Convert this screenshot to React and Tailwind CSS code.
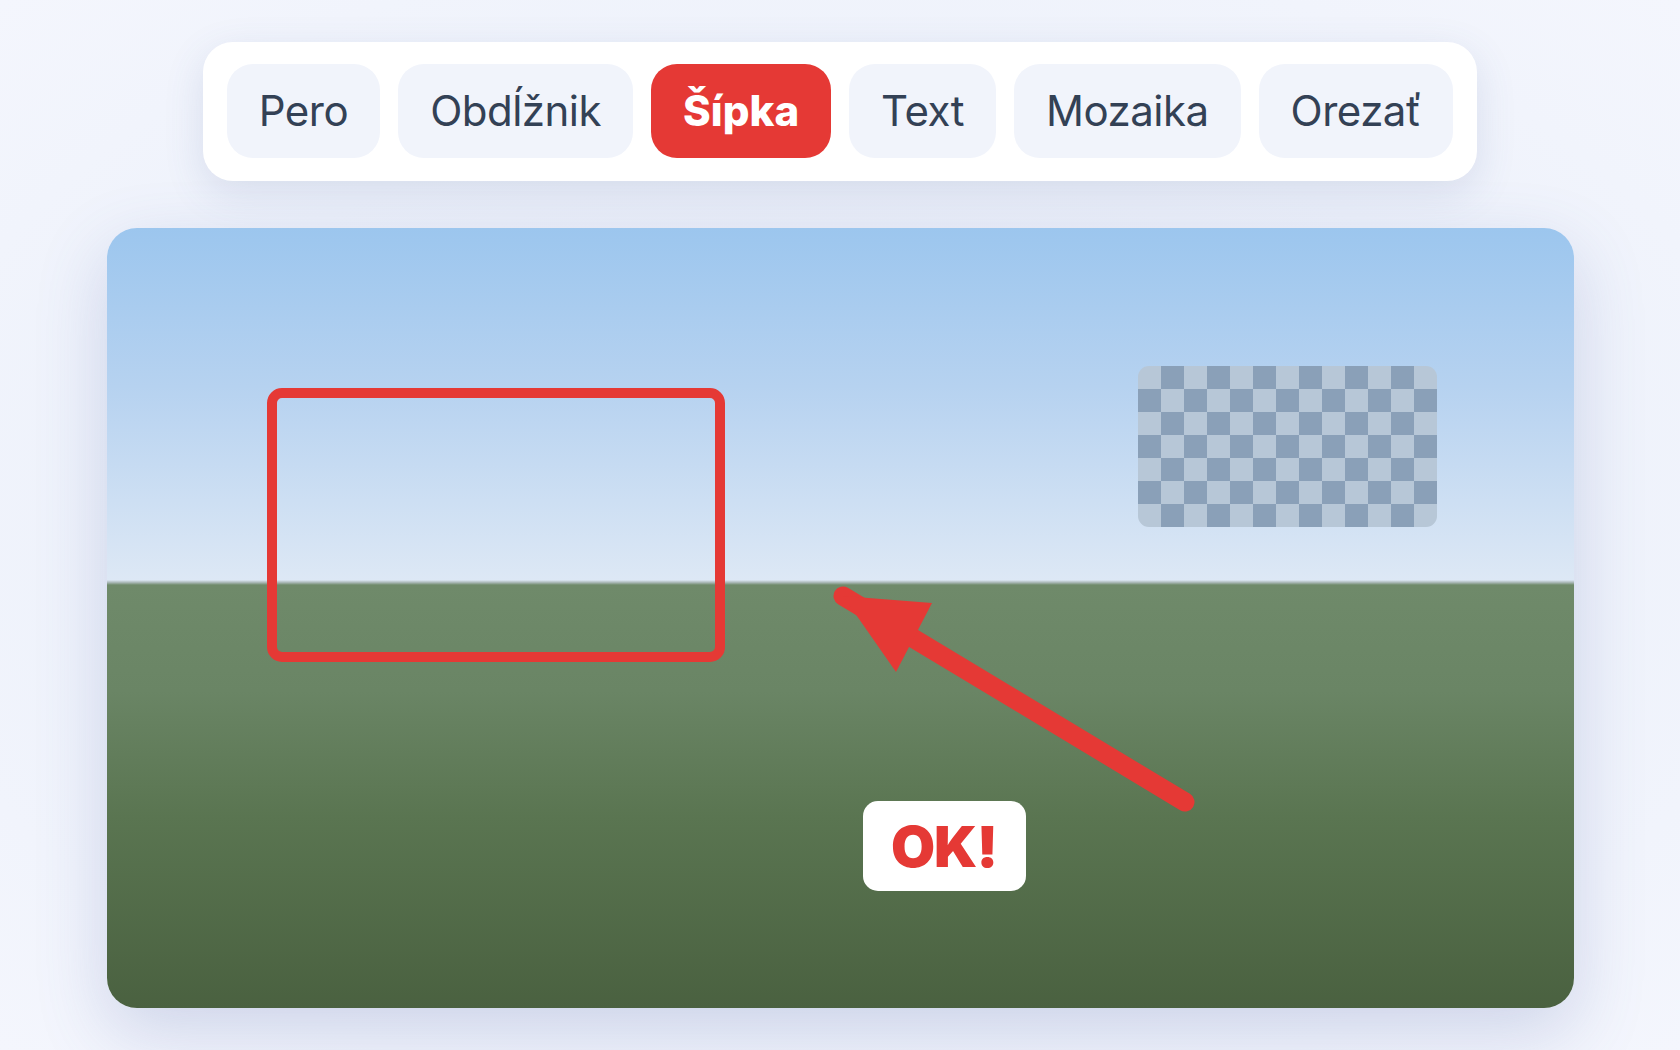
import React from "react";

const tools = ["Pero", "Obdĺžnik", "Šípka", "Text", "Mozaika", "Orezať"];

function Mosaic() {
  const cells = [];
  for (let r = 0; r < 7; r++) {
    for (let c = 0; c < 13; c++) {
      const light = (r + c) % 2 === 0;
      cells.push(
        <div key={`${r}-${c}`} className={light ? "bg-[#b7c7d7]" : "bg-[#8aa0b8]"} />
      );
    }
  }
  return (
    <div className="absolute left-[1031px] top-[138px] w-[299px] h-[161px] rounded-[11px] overflow-hidden grid grid-cols-[repeat(13,23px)] grid-rows-[repeat(7,23px)]">
      {cells}
    </div>
  );
}

export default function App() {
  return (
    <div
      className="min-h-[1050px] w-full flex flex-col items-center pt-[42px] gap-[47px] bg-[radial-gradient(ellipse_at_50%_50%,#e8ecf7_0%,#eef2fb_60%,#f4f6fd_100%)]"
      style={{ fontFamily: "Inter, 'Noto Sans', sans-serif" }}
    >
      <div className="flex items-center gap-[18px] bg-white rounded-[30px] px-[24px] pt-[22px] pb-[23px] shadow-[0_12px_40px_rgba(70,90,150,0.14)]">
        {tools.map((t) => {
          const active = t === "Šípka";
          return (
            <div
              key={t}
              className={
                active
                  ? "h-[94px] px-[32px] flex items-center rounded-[26px] bg-[#e53935] text-white font-extrabold text-[42px] leading-none tracking-[0px]"
                  : "h-[94px] px-[32px] flex items-center rounded-[26px] bg-[#f1f4fb] text-[#334155] font-normal text-[42px] leading-none tracking-[-0.5px]"
              }
            >
              {t}
            </div>
          );
        })}
      </div>

      <div className="relative w-[1467px] h-[780px] rounded-[30px] overflow-hidden flex flex-col shadow-[0_24px_70px_rgba(80,100,170,0.22)]">
        <div className="h-[352px] bg-[linear-gradient(to_bottom,#9cc6ee_0%,#b6d2f0_45%,#dde8f5_100%)]" />
        <div className="h-[5px] bg-[linear-gradient(to_bottom,#dde8f5,#a9b8b6_50%,#6f8a6a)]" />
        <div className="flex-1 bg-[linear-gradient(to_bottom,#6f8a6a_0%,#6a8565_25%,#5a7551_55%,#4a6140_100%)]" />

        <div className="absolute left-[160px] top-[160px] w-[458px] h-[274px] border-[10px] border-[#e53935] rounded-[15px]" />

        <Mosaic />

        <svg
          className="absolute left-0 top-0"
          width="1467"
          height="780"
          viewBox="0 0 1467 780"
        >
          <line
            x1="1078"
            y1="574"
            x2="736"
            y2="368"
            stroke="#e53935"
            strokeWidth="19"
            strokeLinecap="round"
          />
          <polygon points="736,368 825,375 789,444" fill="#e53935" />
        </svg>

        <div className="absolute left-[756px] top-[573px] w-[163px] h-[90px] rounded-[15px] bg-white flex items-center justify-center">
          <span className="text-[#e53935] font-black text-[57px] leading-none tracking-[-1px]">
            OK!
          </span>
        </div>
      </div>
    </div>
  );
}
